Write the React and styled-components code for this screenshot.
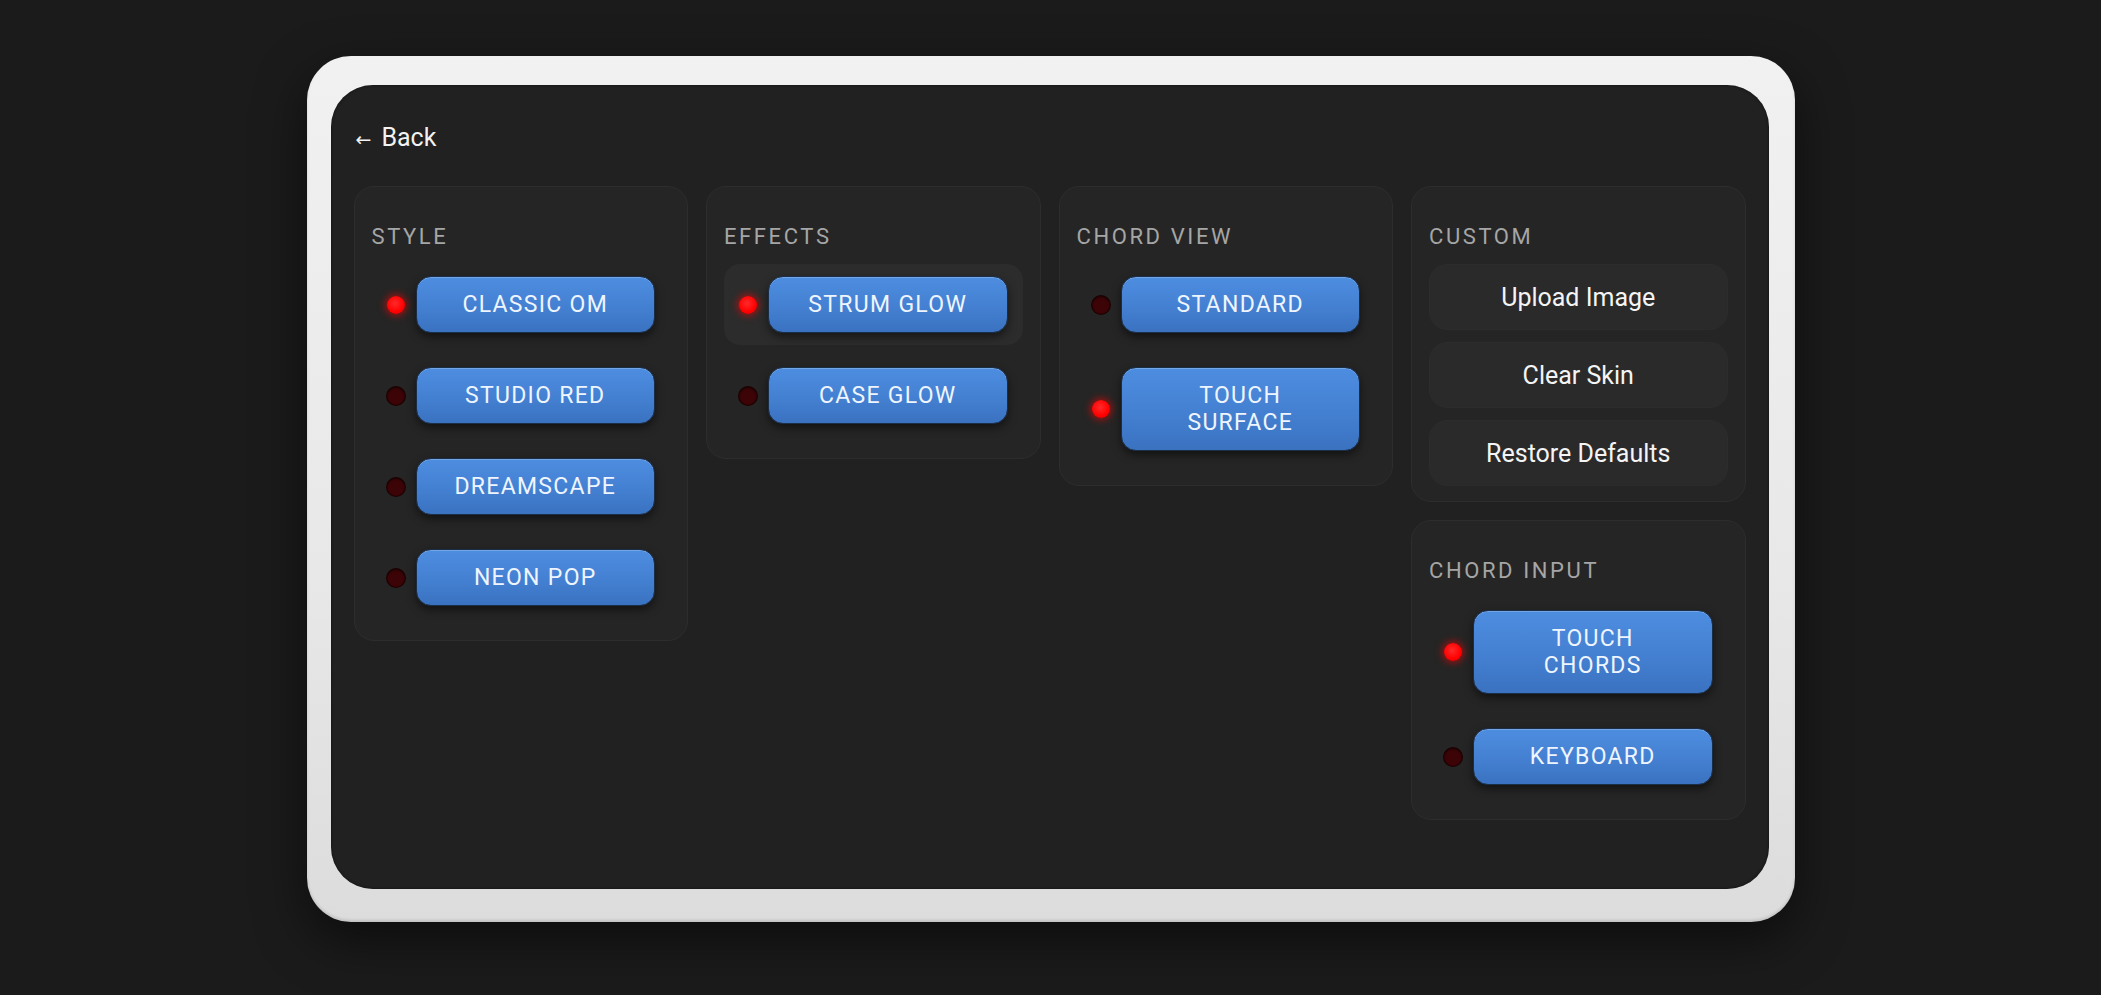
import React, { useState } from 'react';
import styled, { createGlobalStyle, css } from 'styled-components';

const GlobalStyle = createGlobalStyle`
  html, body {
    margin: 0;
    padding: 0;
    background: #1b1b1b;
    font-family: Roboto, "Liberation Sans", sans-serif;
  }
  * { box-sizing: border-box; }
`;

const Page = styled.div`
  min-height: 995px;
  padding-top: 56px;
`;

const Device = styled.div`
  width: 1488px;
  height: 866px;
  margin: 0 auto;
  padding: 29px 26px 33px 24px;
  border-radius: 44px;
  background: linear-gradient(180deg, #f1f1f1 0%, #e8e8e8 60%, #dcdcdc 100%);
  box-shadow: 0 18px 50px rgba(0, 0, 0, 0.55), inset 0 -2px 3px rgba(0, 0, 0, 0.12);
`;

const Screen = styled.div`
  height: 100%;
  border-radius: 42px;
  background: #212121;
  padding: 23px;
  box-shadow: inset 0 0 3px rgba(0, 0, 0, 0.6);
`;

const BackButton = styled.button`
  display: flex;
  align-items: baseline;
  background: none;
  border: none;
  padding: 15px 0;
  margin: 0 0 17px;
  color: #f2f2f2;
  font-family: Roboto, "Liberation Sans", sans-serif;
  font-size: 25px;
  line-height: 30px;
  cursor: pointer;
`;

const Arrow = styled.span`
  font-family: "DejaVu Sans", sans-serif;
  font-size: 19px;
  margin: 0 10px 0 2px;
`;

const Grid = styled.div`
  display: grid;
  grid-template-columns: repeat(4, 1fr);
  gap: 18px;
  align-items: start;
`;

const Column = styled.div`
  display: flex;
  flex-direction: column;
  gap: 18px;
`;

const Panel = styled.section`
  background: #252525;
  border: 1px solid #2d2d2d;
  border-radius: 20px;
  padding: 37px 17px 15px;
`;

const PanelTitle = styled.h2`
  margin: 0 0 14px;
  font-size: 22px;
  line-height: 26px;
  font-weight: 400;
  letter-spacing: 2.6px;
  color: #a6a6a6;
  text-transform: uppercase;
`;

const OptionList = styled.div`
  display: flex;
  flex-direction: column;
  gap: 10px;
  padding-bottom: 7px;
`;

const OptionRow = styled.div`
  display: flex;
  align-items: center;
  gap: 11px;
  padding: 12px 15px;
  border-radius: 16px;
  background: ${p => (p.$hover ? '#2c2c2c' : 'transparent')};
`;

const Led = styled.span`
  flex: 0 0 18px;
  width: 18px;
  height: 18px;
  border-radius: 50%;
  ${p =>
    p.$on
      ? css`
          background: radial-gradient(circle at 45% 40%, #ff2a2a 0%, #f00 60%, #d40000 100%);
          box-shadow: 0 0 7px 2px rgba(255, 0, 0, 0.55);
        `
      : css`
          background: #3d0407;
          box-shadow: inset 0 1px 2px rgba(0, 0, 0, 0.6), 0 0 0 1px #1c0000;
        `}
`;

const BlueButton = styled.button`
  flex: 1;
  padding: 14px 10px;
  border: 1px solid #1b2e48;
  border-radius: 15px;
  background: linear-gradient(180deg, #4d8de0 0%, #4581d3 50%, #3a72c0 100%);
  box-shadow: inset 0 1px 0 rgba(255, 255, 255, 0.22), 0 4px 8px rgba(0, 0, 0, 0.5);
  color: #eef5ff;
  font-family: Roboto, "Liberation Sans", sans-serif;
  font-size: 23px;
  line-height: 27px;
  font-weight: 400;
  letter-spacing: 1.3px;
  text-align: center;
  cursor: pointer;
`;

const ActionList = styled.div`
  display: flex;
  flex-direction: column;
  gap: 12px;
`;

const ActionButton = styled.button`
  height: 66px;
  border: 1px solid #2c2c2c;
  border-radius: 18px;
  background: #2a2a2a;
  color: #f4f4f4;
  font-family: Roboto, "Liberation Sans", sans-serif;
  font-size: 25px;
  font-weight: 400;
  cursor: pointer;
`;

const OptionGroup = ({ title, options, active, hover }) => (
  <Panel>
    <PanelTitle>{title}</PanelTitle>
    <OptionList>
      {options.map(o => (
        <OptionRow key={o} $hover={hover === o}>
          <Led $on={active === o} />
          <BlueButton>
            {o.split('\n').map((line, i) => (
              <React.Fragment key={i}>
                {i > 0 && <br />}
                {line}
              </React.Fragment>
            ))}
          </BlueButton>
        </OptionRow>
      ))}
    </OptionList>
  </Panel>
);

export default function App() {
  const [style] = useState('CLASSIC OM');

  return (
    <Page>
      <GlobalStyle />
      <Device>
        <Screen>
          <BackButton>
            <Arrow>←</Arrow>Back
          </BackButton>
          <Grid>
            <OptionGroup
              title="Style"
              options={['CLASSIC OM', 'STUDIO RED', 'DREAMSCAPE', 'NEON POP']}
              active={style}
            />
            <OptionGroup
              title="Effects"
              options={['STRUM GLOW', 'CASE GLOW']}
              active="STRUM GLOW"
              hover="STRUM GLOW"
            />
            <OptionGroup
              title="Chord View"
              options={['STANDARD', 'TOUCH\nSURFACE']}
              active={'TOUCH\nSURFACE'}
            />
            <Column>
              <Panel>
                <PanelTitle>Custom</PanelTitle>
                <ActionList>
                  <ActionButton>Upload Image</ActionButton>
                  <ActionButton>Clear Skin</ActionButton>
                  <ActionButton>Restore Defaults</ActionButton>
                </ActionList>
              </Panel>
              <OptionGroup
                title="Chord Input"
                options={['TOUCH\nCHORDS', 'KEYBOARD']}
                active={'TOUCH\nCHORDS'}
              />
            </Column>
          </Grid>
        </Screen>
      </Device>
    </Page>
  );
}
